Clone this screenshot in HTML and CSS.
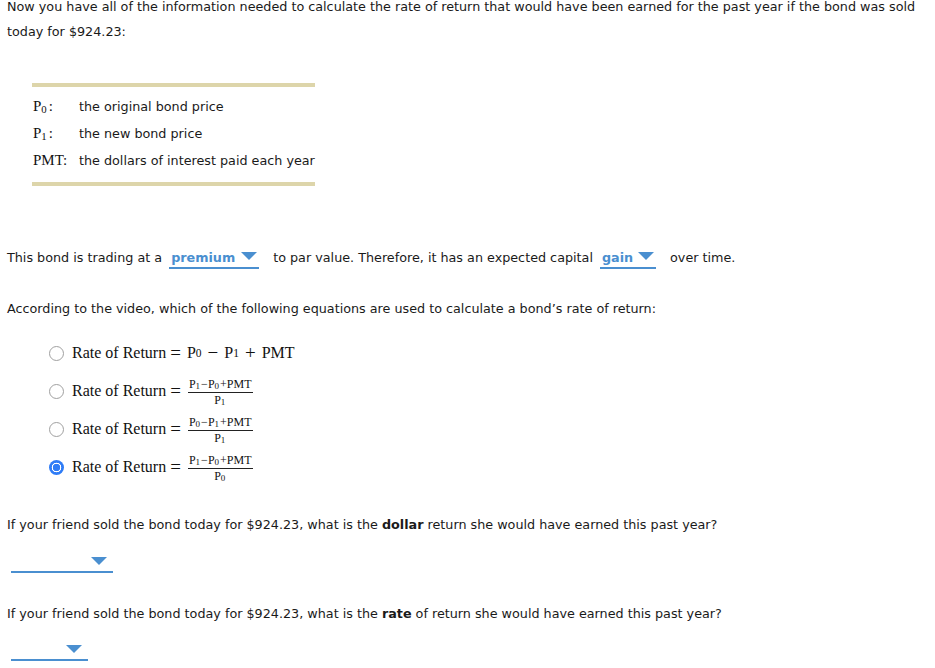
FILE: index.html
```html
<!DOCTYPE html>
<html>
<head>
<meta charset="utf-8">
<link rel="stylesheet" href="styles.css">
</head>
<body>
<p class="intro">Now you have all of the information needed to calculate the rate of return that would have been earned for the past year if the bond was sold today for $924.23:</p>

<div class="defs">
  <div class="def-row"><span class="sym">P<sub>0</sub>:</span><span class="desc">the original bond price</span></div>
  <div class="def-row"><span class="sym">P<sub>1</sub>:</span><span class="desc">the new bond price</span></div>
  <div class="def-row"><span class="sym">PMT:</span><span class="desc">the dollars of interest paid each year</span></div>
</div>

<p class="trading">This bond is trading at a <span class="dd dd-inline"><span class="dd-text">premium</span><span class="tri"></span></span> to par value. Therefore, it has an expected capital <span class="dd dd-inline dd-gain"><span class="dd-text">gain</span><span class="tri"></span></span> over time.</p>

<p class="according">According to the video, which of the following equations are used to calculate a bond’s rate of return:</p>

<div class="options">
  <div class="opt"><span class="radio"></span><span class="math">Rate of Return<span class="op">=</span>P<sub>0</sub><span class="op">−</span>P<sub>1</sub><span class="op">+</span>PMT</span></div>
  <div class="opt"><span class="radio"></span><span class="math">Rate of Return<span class="op">=</span><span class="frac"><span class="num">P<sub>1</sub>−P<sub>0</sub>+PMT</span><span class="den">P<sub>1</sub></span></span></span></div>
  <div class="opt"><span class="radio"></span><span class="math">Rate of Return<span class="op">=</span><span class="frac"><span class="num">P<sub>0</sub>−P<sub>1</sub>+PMT</span><span class="den">P<sub>1</sub></span></span></span></div>
  <div class="opt"><span class="radio checked"></span><span class="math">Rate of Return<span class="op">=</span><span class="frac"><span class="num">P<sub>1</sub>−P<sub>0</sub>+PMT</span><span class="den">P<sub>0</sub></span></span></span></div>
</div>

<p class="q q1">If your friend sold the bond today for $924.23, what is the <b>dollar</b> return she would have earned this past year?</p>
<div class="dd dd-block dd-w1"><span class="tri"></span></div>

<p class="q q2">If your friend sold the bond today for $924.23, what is the <b>rate</b> of return she would have earned this past year?</p>
<div class="dd dd-block dd-w2"><span class="tri"></span></div>
</body>
</html>
```

FILE: styles.css
```css
html, body {
  background: #ffffff;
}
body {
  margin: 0;
  padding: 0 7px;
  font-family: "DejaVu Sans", Verdana, sans-serif;
  font-size: 12.75px;
  color: #1a1a1a;
  overflow: hidden;
}
p {
  margin: 0;
  line-height: 25px;
}
.intro {
  margin-top: -6px;
}
.defs {
  margin: 39px 0 0 25px;
  width: 282px;
  border-top: 4px solid #ddd5aa;
  border-bottom: 4px solid #ddd5aa;
  padding: 6px 0 8px 1px;
}
.def-row {
  display: flex;
  height: 27px;
  align-items: center;
  white-space: nowrap;
}
.sym {
  width: 46px;
  flex: none;
  font-family: "Liberation Serif", "Times New Roman", serif;
  font-size: 15px;
  color: #111;
}
.sym sub, .math sub {
  font-size: 0.72em;
  vertical-align: -0.2em;
  line-height: 0;
  margin-right: 2px;
}
.desc {
  font-size: 12.75px;
}
.trading {
  margin-top: 59px;
}
.dd {
  border-bottom: 2px solid #4a8fd0;
  color: #4a8fd0;
  font-weight: bold;
  position: relative;
}
.dd-inline {
  display: inline-block;
  line-height: 18px;
  padding: 0 17px 0 2px;
  margin: 0 10px 0 3px;
  width: 71px;
}
.dd-gain {
  width: 37px;
}
.tri {
  position: absolute;
  right: 2px;
  bottom: 7px;
  width: 0;
  height: 0;
  border-left: 8px solid transparent;
  border-right: 8px solid transparent;
  border-top: 8px solid #4a8fd0;
}
.according {
  margin-top: 26px;
}
.options {
  margin-top: 13px;
  padding-left: 42px;
}
.opt {
  display: flex;
  align-items: center;
  height: 38px;
}
.radio {
  width: 13px;
  height: 13px;
  border: 1px solid #a0a0a0;
  border-radius: 50%;
  margin-right: 8px;
  box-sizing: content-box;
  background: #fff;
  flex: none;
}
.radio.checked {
  width: 15px;
  height: 15px;
  border: none;
  background: radial-gradient(circle, #2f7cf6 0 3.5px, #ffffff 4px 4.6px, #2f7cf6 5.1px);
}
.math {
  font-family: "Liberation Serif", "Times New Roman", serif;
  font-size: 16px;
  color: #111;
  display: inline-flex;
  align-items: center;
  white-space: pre;
}
.op {
  font-size: 19px;
  line-height: 16px;
  margin: 0 6px 0 4px;
}
.frac {
  display: inline-flex;
  flex-direction: column;
  align-items: center;
  font-size: 12px;
  line-height: 13px;
  margin-left: 1px;
  position: relative;
  top: 1px;
}
.frac .num {
  border-bottom: 1px solid #222;
  padding: 0 1px 1px;
}
.frac .den {
  padding-top: 1px;
}
.frac sub {
  font-size: 0.75em;
  vertical-align: -0.2em;
  line-height: 0;
  margin-right: 1px;
}
.q1 {
  margin-top: 26px;
}
.dd-block {
  display: block;
  height: 24px;
  margin-left: 4px;
}
.dd-w1 {
  width: 102px;
  margin-top: 10px;
}
.dd-w2 {
  width: 77px;
  margin-top: 9px;
}
.dd-block .tri {
  right: 6px;
  bottom: 6px;
}
.q2 {
  margin-top: 28px;
}
```
